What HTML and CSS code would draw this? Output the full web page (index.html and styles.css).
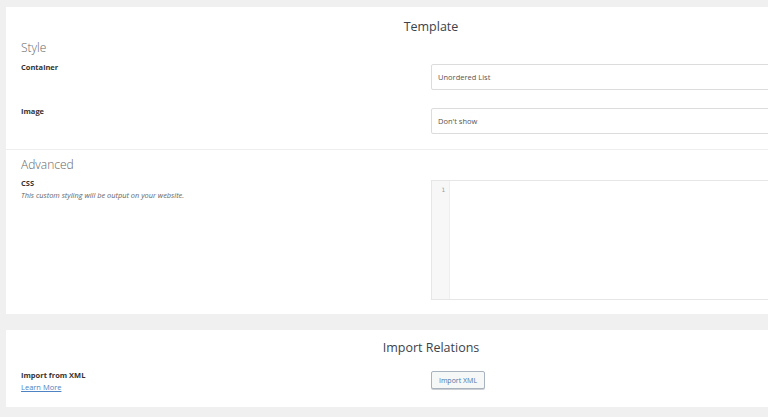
FILE: index.html
```html
<!DOCTYPE html>
<html>
<head>
<meta charset="utf-8">
<link rel="stylesheet" href="styles.css">
</head>
<body>
<div class="page">
  <section class="card card-template">
    <h2 class="card-title">Template</h2>
    <h3 class="group-title">Style</h3>
    <div class="row row-first">
      <div class="label"><span class="label-name">Container</span></div>
      <div class="field"><div class="select">Unordered List</div></div>
    </div>
    <div class="row row-second">
      <div class="label"><span class="label-name">Image</span></div>
      <div class="field"><div class="select">Don't show</div></div>
    </div>
    <div class="divider"></div>
    <h3 class="group-title group-advanced">Advanced</h3>
    <div class="row row-css">
      <div class="label">
        <span class="label-name">CSS</span>
        <span class="label-desc">This custom styling will be output on your website.</span>
      </div>
      <div class="field">
        <div class="editor">
          <div class="gutter">1</div>
          <div class="code"></div>
        </div>
      </div>
    </div>
  </section>
  <section class="card card-import">
    <h2 class="card-title">Import Relations</h2>
    <div class="row row-import">
      <div class="label">
        <span class="label-name">Import from XML</span>
        <a class="link" href="#">Learn More</a>
      </div>
      <div class="field field-button"><button class="button">Import XML</button></div>
    </div>
  </section>
</div>
</body>
</html>
```
FILE: styles.css
```css
html, body {
  margin: 0;
  padding: 0;
}
body {
  background: #f0f0f0;
  font-family: "Open Sans", "Noto Sans", sans-serif;
  color: #444;
  overflow: hidden;
  width: 768px;
  height: 417px;
}
.page {
  padding: 7px 0 0 6px;
  display: flex;
  flex-direction: column;
  gap: 16px;
}
.card {
  background: #fff;
  width: 850px;
  box-sizing: border-box;
  padding: 10px 0 14px 0;
}
.card-import {
  padding-top: 8px;
}
.card-title {
  margin: 0;
  text-align: center;
  font-size: 12.5px;
  font-weight: 400;
  line-height: 20px;
  color: #3c434a;
}
.group-title {
  margin: 2px 0 0 15px;
  font-size: 12px;
  font-weight: 300;
  line-height: 18px;
  color: #666;
}
.group-advanced {
  margin-top: 6px;
}
.row {
  display: grid;
  grid-template-columns: 410px 1fr;
  padding-left: 15px;
}
.row-first { margin-top: 3px; }
.row-second { margin-top: 14px; }
.row-css { margin-top: 2px; }
.row-import { margin-top: 10px; }
.label {
  display: flex;
  flex-direction: column;
  padding-top: 1px;
}
.label-name {
  font-size: 7.5px;
  font-weight: 700;
  line-height: 12px;
  color: #333;
}
.label-desc {
  font-size: 7.4px;
  font-style: italic;
  line-height: 12px;
  color: #666;
}
.field {
  padding-top: 4px;
}
.field-button {
  display: flex;
  align-items: flex-start;
  padding-top: 3px;
}
.select {
  height: 26px;
  box-sizing: border-box;
  border: 1px solid #dcdcdc;
  border-radius: 2px;
  font-size: 7.5px;
  line-height: 24px;
  padding-left: 6px;
  color: #555;
}
.divider {
  height: 1px;
  background: #eeeeee;
  margin-top: 15px;
}
.editor {
  display: flex;
  height: 120px;
  border: 1px solid #e6e6e6;
  box-sizing: border-box;
}
.gutter {
  width: 18px;
  background: #f7f7f7;
  border-right: 1px solid #eee;
  font-family: "DejaVu Sans Mono", monospace;
  font-size: 6px;
  color: #999;
  text-align: right;
  padding: 5px 4px 0 0;
  box-sizing: border-box;
}
.code {
  flex: 1;
}
.link {
  font-size: 7.5px;
  line-height: 12px;
  color: #4f84c4;
  text-decoration: underline;
}
.button {
  display: block;
  font-family: "Open Sans", "Noto Sans", sans-serif;
  font-size: 7px;
  height: 18px;
  width: 54px;
  padding: 0;
  border: 1px solid #a9b3c0;
  border-radius: 2px;
  background: #f6f7f7;
  color: #4a78a8;
  box-shadow: 0 1px 0 #ccd0d4;
}
```
